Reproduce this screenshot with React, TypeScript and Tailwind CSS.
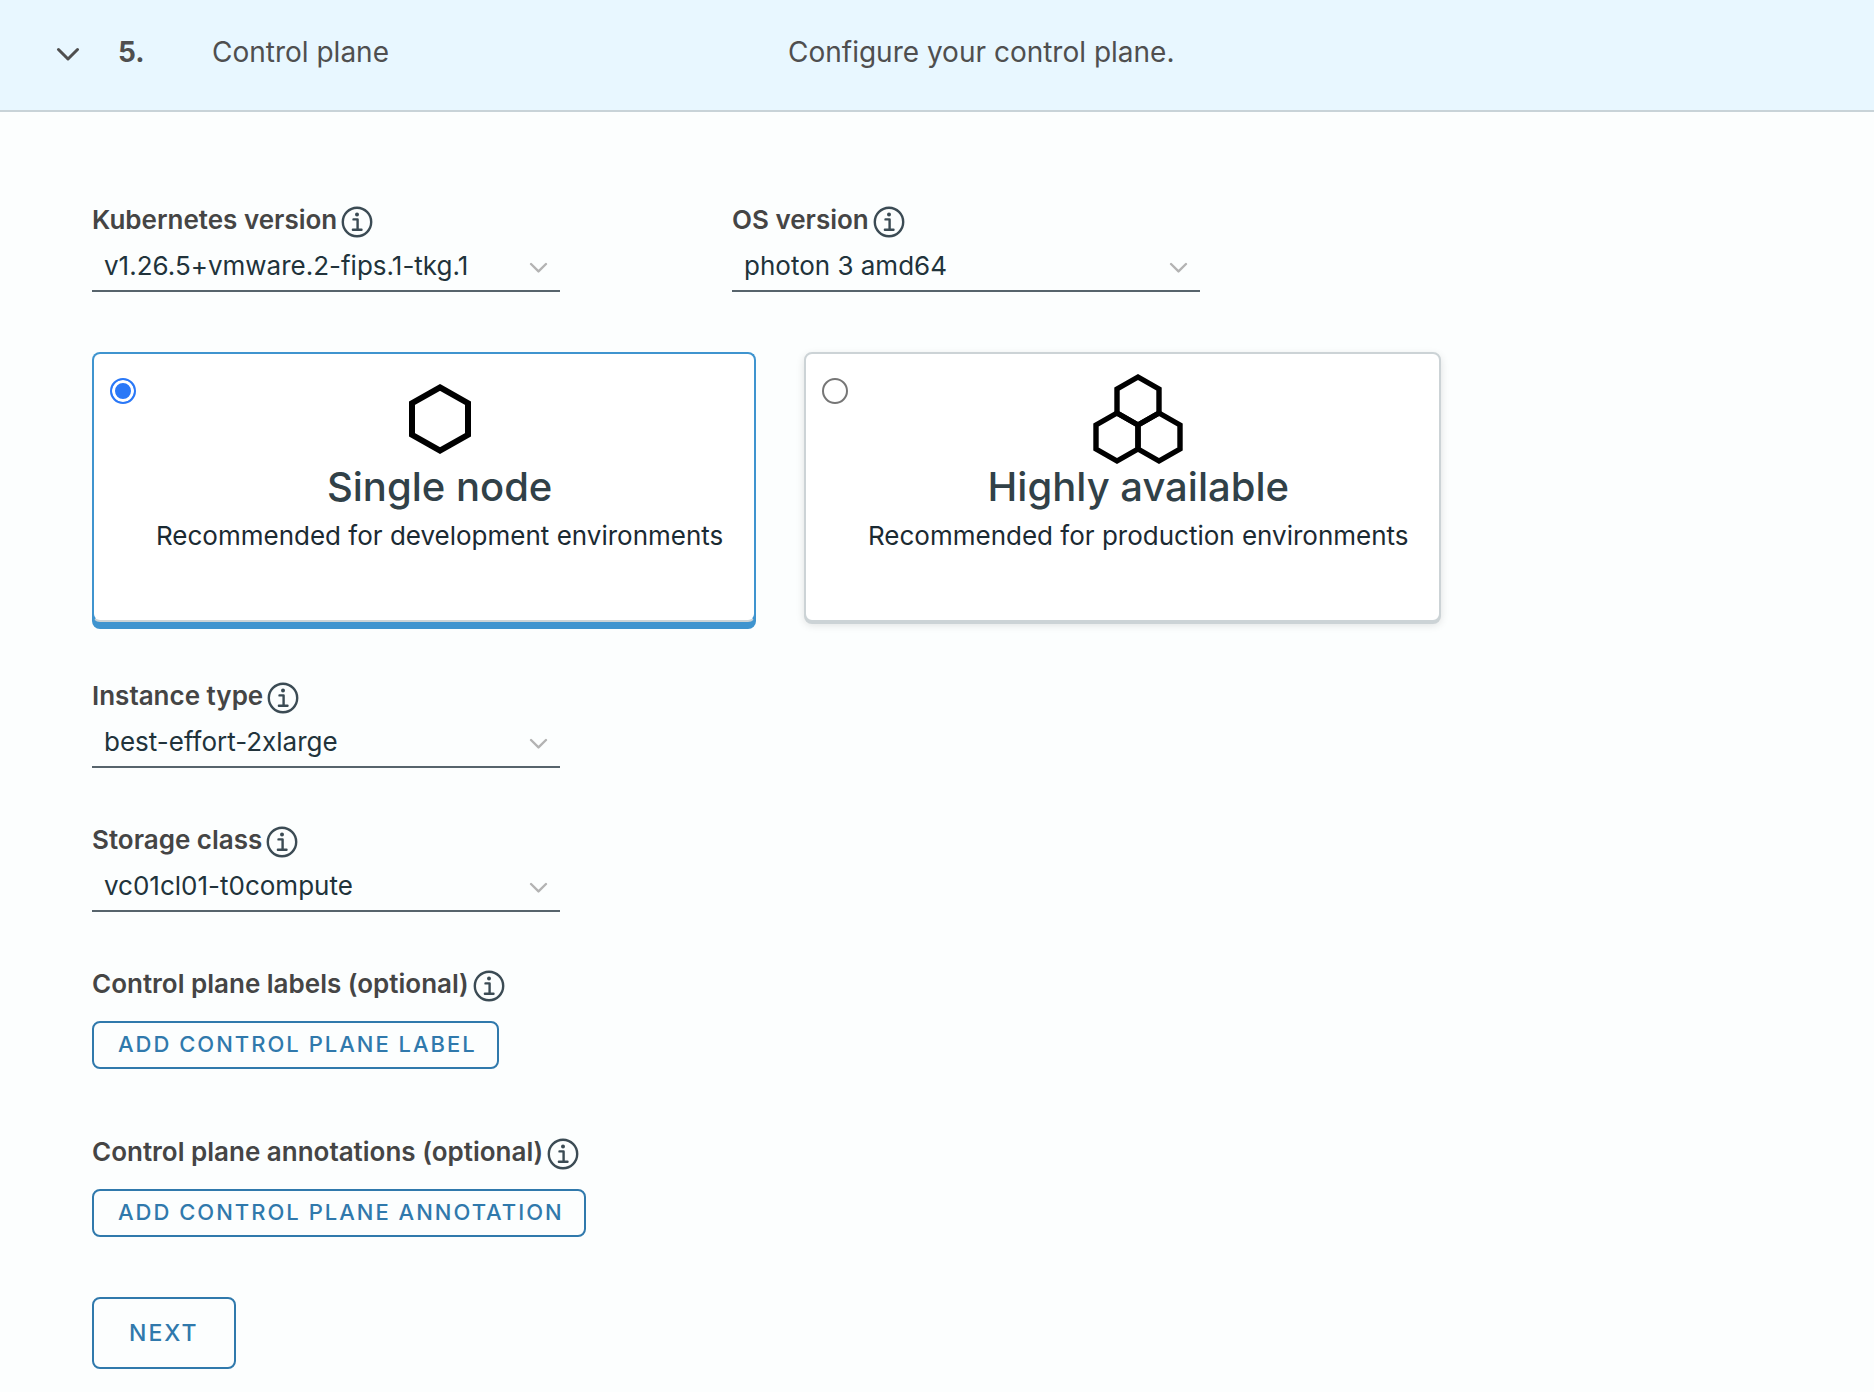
import { useState } from "react";
import type { ReactNode } from "react";

function Chevron({ className }: { className: string }) {
  return (
    <svg viewBox="0 0 24 14" fill="none" stroke="currentColor" strokeWidth="3" strokeLinecap="round" strokeLinejoin="round" className={className} aria-hidden="true">
      <path d="M2.5 2.5 12 12 21.5 2.5" />
    </svg>
  );
}

function InfoButton({ topic }: { topic: string }) {
  return (
    <button type="button" aria-label={`About ${topic}`} className="mt-1 text-[#3b4b54]">
      <svg viewBox="0 0 32 32" fill="none" stroke="currentColor" strokeWidth="2.4" className="size-8" aria-hidden="true">
        <circle cx="16" cy="16" r="14.2" />
        <circle cx="16" cy="8.4" r="2" fill="currentColor" stroke="none" />
        <path d="M12.5 13.4H16.6V23.8M11.9 23.8H20.5" strokeLinecap="round" strokeLinejoin="round" />
      </svg>
    </button>
  );
}

function SelectField({ id, label, options }: { id: string; label: string; options: string[] }) {
  return (
    <div className="w-[468px]">
      <div className="flex h-9 items-center gap-1">
        <label htmlFor={id} className="text-[26px] leading-8 font-semibold text-[#454545]">{label}</label>
        <InfoButton topic={label} />
      </div>
      <div className="relative mt-2 border-b-2 border-[#57646c]">
        <select id={id} className="block h-11 w-full appearance-none bg-transparent pr-12 pb-1 pl-3 text-[26px] leading-8 text-[#21333b] outline-none">
          {options.map((option) => (
            <option key={option}>{option}</option>
          ))}
        </select>
        <Chevron className="pointer-events-none absolute top-4 right-3 h-[11px] w-[19px] text-[#b3b3b3]" />
      </div>
    </div>
  );
}

function NodeCard({
  title,
  description,
  value,
  checked,
  onSelect,
  children,
  className,
}: {
  title: string;
  description: string;
  value: string;
  checked: boolean;
  onSelect: (value: string) => void;
  children: ReactNode;
  className: string;
}) {
  return (
    <label
      className={`flex h-[270px] rounded-lg border-2 bg-white pr-[34px] pl-4 ${className} ${
        checked
          ? "border-[#3f94cf] border-b-[#ccd3d6] shadow-[0_7px_0_0_#3f94cf]"
          : "border-[#ccd3d6] shadow-[0_2px_0_0_#ccd3d6,0_3px_8px_0_rgba(0,0,0,0.12)]"
      }`}
    >
      <input
        type="radio"
        name="plan"
        value={value}
        checked={checked}
        onChange={() => onSelect(value)}
        className="mt-6 size-[26px] shrink-0 appearance-none rounded-full border-2 border-[#767676] bg-white checked:border-[#2a78f7] checked:bg-[#2a78f7] checked:shadow-[inset_0_0_0_3px_#fff]"
      />
      <span className="ml-5 flex grow flex-col items-center">
        <span className="mt-[17px] flex h-24 items-center justify-center">{children}</span>
        <span className="text-[40px] leading-10 font-medium text-[#314148]">{title}</span>
        <span className="mt-[13px] text-[26px] leading-8 whitespace-nowrap text-[#1b2a32]">{description}</span>
      </span>
    </label>
  );
}

function SmallButtonField({ label, action }: { label: string; action: string }) {
  return (
    <div>
      <div className="flex h-9 items-center gap-1">
        <span className="text-[26px] leading-8 font-semibold text-[#454545]">{label}</span>
        <InfoButton topic={label} />
      </div>
      <button type="button" className="mt-[19px] h-12 rounded-lg border-2 border-[#3079ac] pr-5 pb-0.5 pl-6 text-[22px] leading-8 font-medium tracking-[2px] text-[#3079ac] uppercase">
        {action}
      </button>
    </div>
  );
}

export default function App() {
  const [plan, setPlan] = useState("single");
  const [open, setOpen] = useState(true);

  return (
    <main className="min-h-screen bg-[#fcfefe] font-['Inter',sans-serif]">
      <header className="border-b-2 border-[#c8d3d8] bg-[#e8f7ff] text-[#4f4f4f]">
        <button
          type="button"
          aria-expanded={open}
          onClick={() => setOpen(!open)}
          className="grid w-full grid-cols-[62px_94px_576px_1fr] items-center pt-[34px] pr-8 pb-10 pl-14 text-left text-[28px] leading-9"
        >
          <Chevron className="mt-1 h-[14px] w-6" />
          <span className="font-bold">5.</span>
          <span>Control plane</span>
          <span>Configure your control plane.</span>
        </button>
      </header>

      {open && (
        <form className="px-[92px] pt-[90px] pb-6" onSubmit={(event) => event.preventDefault()}>
          <div className="flex flex-wrap gap-x-[172px] gap-y-10">
            <SelectField id="k8s" label="Kubernetes version" options={["v1.26.5+vmware.2-fips.1-tkg.1"]} />
            <SelectField id="os" label="OS version" options={["photon 3 amd64"]} />
          </div>

          <div className="mt-[60px] flex flex-wrap gap-12">
            <NodeCard title="Single node" description="Recommended for development environments" value="single" checked={plan === "single"} onSelect={setPlan} className="w-[664px]">
              <svg viewBox="0 0 64 72" fill="none" stroke="#000" strokeWidth="6" className="h-[72px] w-16" aria-hidden="true">
                <path d="M32 4.4 60 20.2V51.8L32 67.6 4 51.8V20.2Z" />
              </svg>
            </NodeCard>
            <NodeCard title="Highly available" description="Recommended for production environments" value="ha" checked={plan === "ha"} onSelect={setPlan} className="w-[637px]">
              <svg viewBox="0 0 90 92" fill="none" stroke="#000" strokeWidth="5.4" className="h-[92px] w-[90px]" aria-hidden="true">
                <path d="M45 4 66 16V40L45 52 24 40V16Z" />
                <path d="M24 40 45 52V76L24 88 3 76V52Z" />
                <path d="M66 40 87 52V76L66 88 45 76V52Z" />
              </svg>
            </NodeCard>
          </div>

          <div className="mt-14 flex flex-col gap-[54px]">
            <SelectField id="instance" label="Instance type" options={["best-effort-2xlarge"]} />
            <SelectField id="storage" label="Storage class" options={["vc01cl01-t0compute"]} />
          </div>

          <div className="mt-[54px] flex flex-col gap-[65px]">
            <SmallButtonField label="Control plane labels (optional)" action="Add control plane label" />
            <SmallButtonField label="Control plane annotations (optional)" action="Add control plane annotation" />
          </div>

          <button type="submit" className="mt-[60px] h-[72px] rounded-lg border-2 border-[#3079ac] px-[35px] text-[23px] leading-8 font-medium tracking-[2px] text-[#3079ac] uppercase">
            Next
          </button>
        </form>
      )}
    </main>
  );
}
